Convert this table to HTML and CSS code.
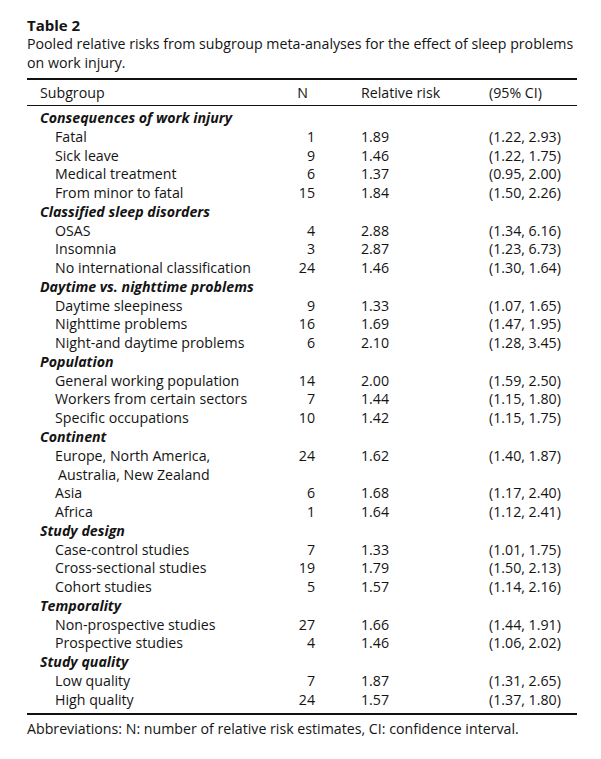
FILE: index.html
```html
<!DOCTYPE html>
<html lang="en">
<head>
<meta charset="utf-8">
<title>Table 2</title>
<link rel="stylesheet" href="styles.css">
</head>
<body>
<div class="page">
  <div class="title">Table 2</div>
  <div class="caption">Pooled relative risks from subgroup meta-analyses for the effect of sleep problems<br>on work injury.</div>
  <table class="tbl">
    <colgroup>
      <col class="c1"><col class="c2"><col class="c3"><col class="c4">
    </colgroup>
    <thead>
      <tr><th class="sub">Subgroup</th><th class="n nh">N</th><th class="rr">Relative risk</th><th class="ci">(95% CI)</th></tr>
    </thead>
    <tbody>
      <tr class="grp"><td colspan="4">Consequences of work injury</td></tr>
      <tr><td class="item">Fatal</td><td class="n">1</td><td class="rr">1.89</td><td class="ci">(1.22, 2.93)</td></tr>
      <tr><td class="item">Sick leave</td><td class="n">9</td><td class="rr">1.46</td><td class="ci">(1.22, 1.75)</td></tr>
      <tr><td class="item">Medical treatment</td><td class="n">6</td><td class="rr">1.37</td><td class="ci">(0.95, 2.00)</td></tr>
      <tr><td class="item">From minor to fatal</td><td class="n">15</td><td class="rr">1.84</td><td class="ci">(1.50, 2.26)</td></tr>
      <tr class="grp"><td colspan="4">Classified sleep disorders</td></tr>
      <tr><td class="item">OSAS</td><td class="n">4</td><td class="rr">2.88</td><td class="ci">(1.34, 6.16)</td></tr>
      <tr><td class="item">Insomnia</td><td class="n">3</td><td class="rr">2.87</td><td class="ci">(1.23, 6.73)</td></tr>
      <tr><td class="item">No international classification</td><td class="n">24</td><td class="rr">1.46</td><td class="ci">(1.30, 1.64)</td></tr>
      <tr class="grp"><td colspan="4">Daytime vs. nighttime problems</td></tr>
      <tr><td class="item">Daytime sleepiness</td><td class="n">9</td><td class="rr">1.33</td><td class="ci">(1.07, 1.65)</td></tr>
      <tr><td class="item">Nighttime problems</td><td class="n">16</td><td class="rr">1.69</td><td class="ci">(1.47, 1.95)</td></tr>
      <tr><td class="item">Night-and daytime problems</td><td class="n">6</td><td class="rr">2.10</td><td class="ci">(1.28, 3.45)</td></tr>
      <tr class="grp"><td colspan="4">Population</td></tr>
      <tr><td class="item">General working population</td><td class="n">14</td><td class="rr">2.00</td><td class="ci">(1.59, 2.50)</td></tr>
      <tr><td class="item">Workers from certain sectors</td><td class="n">7</td><td class="rr">1.44</td><td class="ci">(1.15, 1.80)</td></tr>
      <tr><td class="item">Specific occupations</td><td class="n">10</td><td class="rr">1.42</td><td class="ci">(1.15, 1.75)</td></tr>
      <tr class="grp"><td colspan="4">Continent</td></tr>
      <tr><td class="item">Europe, North America,<br><span class="cont">Australia, New Zealand</span></td><td class="n">24</td><td class="rr">1.62</td><td class="ci">(1.40, 1.87)</td></tr>
      <tr><td class="item">Asia</td><td class="n">6</td><td class="rr">1.68</td><td class="ci">(1.17, 2.40)</td></tr>
      <tr><td class="item">Africa</td><td class="n">1</td><td class="rr">1.64</td><td class="ci">(1.12, 2.41)</td></tr>
      <tr class="grp"><td colspan="4">Study design</td></tr>
      <tr><td class="item">Case-control studies</td><td class="n">7</td><td class="rr">1.33</td><td class="ci">(1.01, 1.75)</td></tr>
      <tr><td class="item">Cross-sectional studies</td><td class="n">19</td><td class="rr">1.79</td><td class="ci">(1.50, 2.13)</td></tr>
      <tr><td class="item">Cohort studies</td><td class="n">5</td><td class="rr">1.57</td><td class="ci">(1.14, 2.16)</td></tr>
      <tr class="grp"><td colspan="4">Temporality</td></tr>
      <tr><td class="item">Non-prospective studies</td><td class="n">27</td><td class="rr">1.66</td><td class="ci">(1.44, 1.91)</td></tr>
      <tr><td class="item">Prospective studies</td><td class="n">4</td><td class="rr">1.46</td><td class="ci">(1.06, 2.02)</td></tr>
      <tr class="grp"><td colspan="4">Study quality</td></tr>
      <tr><td class="item">Low quality</td><td class="n">7</td><td class="rr">1.87</td><td class="ci">(1.31, 2.65)</td></tr>
      <tr class="last"><td class="item">High quality</td><td class="n">24</td><td class="rr">1.57</td><td class="ci">(1.37, 1.80)</td></tr>
    </tbody>
  </table>
  <div class="note">Abbreviations: N: number of relative risk estimates, CI: confidence interval.</div>
</div>
</body>
</html>
```
FILE: styles.css
```css
html, body {
  margin: 0;
  padding: 0;
  background: #ffffff;
}
.page {
  width: 550px;
  padding: 16px 0 0 27px;
  font-family: "Open Sans", "Noto Sans", "Liberation Sans", sans-serif;
  font-size: 14.2px;
  color: #141414;
}
.title {
  font-weight: 700;
  font-size: 15px;
  line-height: 19px;
}
.caption {
  line-height: 18.5px;
  white-space: nowrap;
}
.tbl {
  width: 550px;
  margin-top: 6px;
  border-collapse: collapse;
  table-layout: fixed;
  border-top: 2px solid #111;
  border-bottom: 2px solid #111;
}
.c1 { width: 243px; }
.c2 { width: 45px; }
.c3 { width: 174px; }
.c4 { width: 88px; }
.tbl th {
  font-weight: 400;
  text-align: left;
  padding: 3px 0 3px 0;
  height: 19px;
  line-height: 19px;
  border-bottom: 1.5px solid #111;
}
.tbl th.sub { padding-left: 13px; }
.tbl th.nh { text-align: right; padding-right: 7px; }
.tbl td {
  padding: 0;
  line-height: 18.77px;
  vertical-align: top;
  white-space: nowrap;
}
.tbl tbody tr:first-child td { padding-top: 3px; }
.tbl tr.last td { padding-bottom: 3px; }
.grp td {
  font-weight: 700;
  font-style: italic;
  padding-left: 13px !important;
}
.item { padding-left: 28px !important; }
.cont { display: inline-block; padding-left: 3px; }
.n { text-align: right; }
.tbl .rr { padding-left: 46px; text-align: left; }
.tbl .ci { text-align: left; }
.note {
  line-height: 18px;
  margin-top: 5px;
}
```
